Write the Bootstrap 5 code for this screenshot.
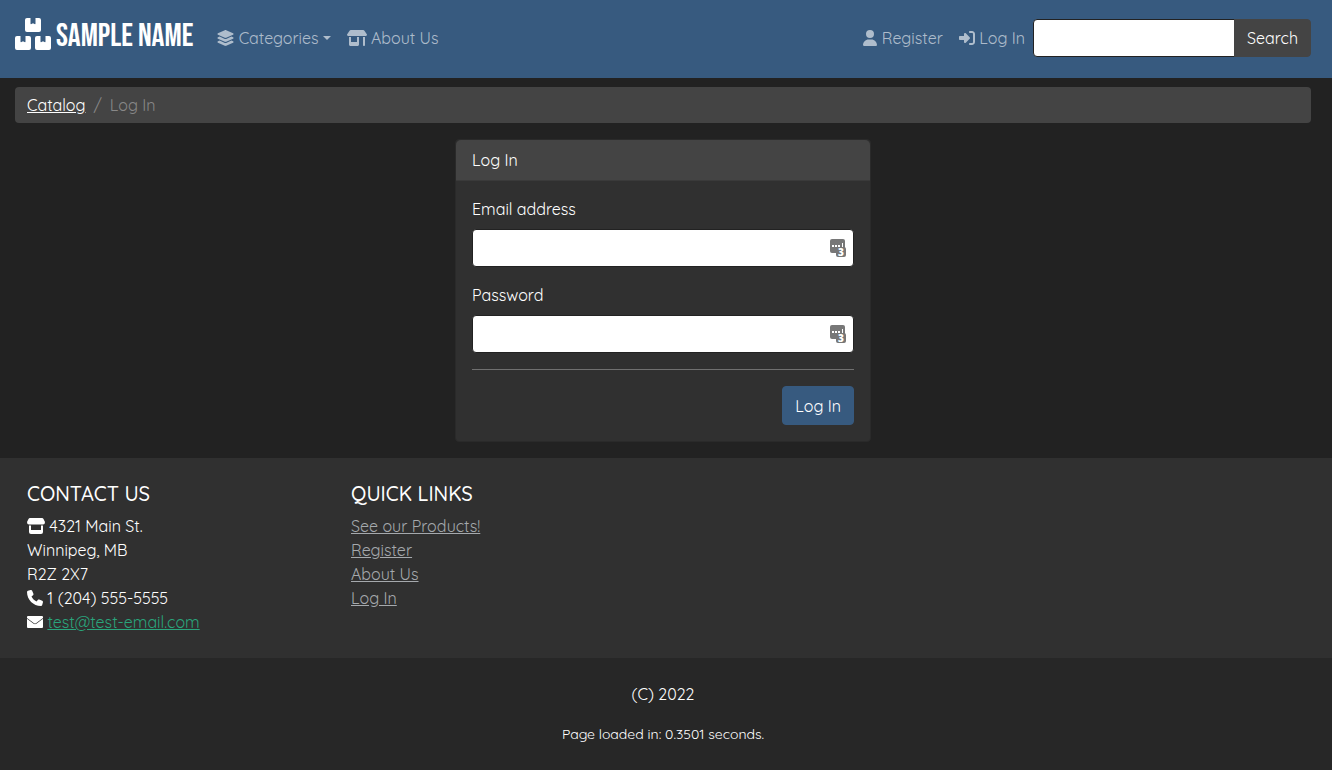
<!DOCTYPE html>
<html lang="en">
<head>
<meta charset="utf-8">
<meta name="viewport" content="width=device-width, initial-scale=1">
<title>Log In</title>
<link href="https://cdn.jsdelivr.net/npm/bootstrap@5.3.0/dist/css/bootstrap.min.css" rel="stylesheet">
<style>
  body { background: #222; color: #fff; font-family: Quicksand, Lato, sans-serif; font-size: 16px; line-height: 24px; }
  .page-gutter { padding-left: 15px; padding-right: 21px; }
  .site-nav { background: #375a7f; padding-top: 16px; padding-bottom: 18px; }
  .site-nav .nav-link, .site-nav .nav-link:hover { color: rgba(255,255,255,.6); padding: 8px; white-space: nowrap; }
  .site-nav .navbar-brand { color: #fff; padding: 0 0 6px; margin-right: 16px; gap: 5px; }
  .brand-name { font: 400 32px/34px "Bebas Neue", "Liberation Sans Narrow", "Liberation Sans", sans-serif; padding-top: 4px; }
  .icon { height: 16px; width: auto; fill: currentColor; vertical-align: -2px; }
  .form-control, .form-control:focus { background: #fff; border-color: #222; border-radius: 4px; height: 38px; color: #222; }
  .search-group { width: 278px; }
  .btn-search, .btn-search:hover { background: #444; border-color: #444; color: #fff; border-radius: 4px; }
  .crumbs { background: #444; border-radius: 4px; padding: 6px 12px; margin: 9px 0 16px; }
  .crumbs a { color: #fff; }
  .crumbs .breadcrumb-item.active, .crumbs .breadcrumb-item::before { color: #888 !important; }
  .login-card { background: #303030; border-color: #2a2a2a; border-radius: 4px; color: #fff; }
  .login-card .card-header { background: #444; border-color: #3a3a3a; }
  .login-card hr { border-color: #707070; opacity: 1; margin: 16px 0; }
  .manager-icon { position: absolute; right: 8px; top: 10px; width: 16px; height: 18px; overflow: visible; }
  .btn-login, .btn-login:hover { background: #375a7f; border-color: #375a7f; color: #fff; border-radius: 4px; height: 39px; }
  .info-band { background: #303030; }
  .info-band h2 { font-size: 20px; line-height: 24px; text-transform: uppercase; }
  .mail-link { color: #2aa57c; }
  .quick-links a { color: #a5a9ad; }
  .legal-band { background: #272727; padding-right: 6px; }
  .load-time { font-size: 14px; }
</style>
</head>
<body class="d-flex flex-column min-vh-100">
<nav class="navbar navbar-expand-lg site-nav">
  <div class="container-fluid page-gutter">
    <a class="navbar-brand d-flex align-items-center" href="#">
      <svg width="36" height="34" viewBox="0 0 36 34" fill="#fff" aria-hidden="true">
        <defs><path id="box" d="M2 0H5.500V5.500Q5.500 6.500 6.500 6L8 5.200L9.500 6Q10.500 6.500 10.500 5.500V0H14Q16 0 16 2V12Q16 14 14 14H2Q0 14 0 12V2Q0 0 2 0Z"/></defs>
        <use href="#box" x="10" y="0"/><use href="#box" x="0" y="18"/><use href="#box" x="20" y="18"/>
      </svg>
      <span class="brand-name">SAMPLE NAME</span>
    </a>
    <button class="navbar-toggler" type="button" data-bs-toggle="collapse" data-bs-target="#menu" aria-controls="menu" aria-label="Toggle navigation"><span class="navbar-toggler-icon"></span></button>
    <div class="collapse navbar-collapse" id="menu">
      <ul class="navbar-nav me-auto">
        <li class="nav-item dropdown"><a class="nav-link dropdown-toggle" href="#" role="button" data-bs-toggle="dropdown"><svg class="icon" viewBox="16 0 544 512" aria-hidden="true"><path d="M264.500 5.200c14.900-6.900 32.100-6.900 47 0l218.600 101c8.500 3.900 13.900 12.400 13.900 21.800s-5.400 17.900-13.900 21.800l-218.600 101c-14.900 6.900-32.100 6.900-47 0L45.900 149.800C37.400 145.800 32 137.300 32 128s5.400-17.900 13.900-21.800L264.500 5.200zM476.900 209.600l53.200 24.600c8.500 3.900 13.900 12.400 13.900 21.800s-5.400 17.900-13.900 21.800l-218.600 101c-14.900 6.900-32.100 6.900-47 0L45.900 277.800C37.400 273.800 32 265.300 32 256s5.400-17.900 13.900-21.800l53.200-24.600 152 70.200c23.400 10.800 50.400 10.800 73.800 0l152-70.200zm-152 198.200l152-70.200 53.200 24.600c8.500 3.900 13.900 12.400 13.900 21.800s-5.400 17.900-13.900 21.800l-218.600 101c-14.900 6.900-32.100 6.900-47 0L45.900 405.800C37.400 401.800 32 393.300 32 384s5.400-17.900 13.900-21.800l53.200-24.600 152 70.200c23.400 10.800 50.400 10.800 73.800 0z"/></svg> Categories</a></li>
        <li class="nav-item"><a class="nav-link" href="#"><svg class="icon" viewBox="0 0 640 512" aria-hidden="true"><path d="M36.800 192H603.200c20.300 0 36.800-16.500 36.800-36.800c0-7.300-2.200-14.400-6.200-20.400L558.200 21.400C549.300 8 534.400 0 518.300 0H121.700c-16 0-31 8-39.900 21.400L6.200 134.700c-4 6.100-6.200 13.200-6.200 20.400C0 175.500 16.500 192 36.800 192zM64 224V464c0 26.600 21.500 48 48 48H336c26.500 0 48-21.500 48-48V224H320V384H128V224H64zm448 0V480c0 17.700 14.300 32 32 32s32-14.300 32-32V224H512z"/></svg> About Us</a></li>
      </ul>
      <ul class="navbar-nav">
        <li class="nav-item"><a class="nav-link" href="#"><svg class="icon" viewBox="0 0 448 512" aria-hidden="true"><path d="M224 256A128 128 0 1 0 224 0a128 128 0 1 0 0 256zm-45.700 48C79.800 304 0 383.800 0 482.300C0 498.700 13.300 512 29.700 512H418.300c16.400 0 29.700-13.300 29.700-29.700C448 383.800 368.200 304 269.700 304H178.300z"/></svg> Register</a></li>
        <li class="nav-item"><a class="nav-link" href="#"><svg class="icon" viewBox="0 0 512 512" aria-hidden="true"><path d="M217.900 105.900L340.700 228.700c7.200 7.200 11.300 17.100 11.300 27.300s-4.100 20.100-11.300 27.300L217.900 406.100c-6.400 6.400-15 9.900-24 9.900c-18.700 0-33.900-15.200-33.900-33.900l0-62.100L32 320c-17.700 0-32-14.300-32-32l0-64c0-17.700 14.300-32 32-32l128 0 0-62.100c0-18.700 15.200-33.900 33.900-33.900c9 0 17.600 3.600 24 9.900zM352 416l64 0c17.700 0 32-14.300 32-32l0-256c0-17.700-14.300-32-32-32l-64 0c-17.700 0-32-14.300-32-32s14.300-32 32-32l64 0c53 0 96 43 96 96l0 256c0 53-43 96-96 96l-64 0c-17.700 0-32-14.300-32-32s14.300-32 32-32z"/></svg> Log In</a></li>
      </ul>
      <form class="input-group search-group flex-nowrap" onsubmit="return false">
        <input class="form-control" type="search" aria-label="Search the catalog">
        <button class="btn btn-search" type="submit">Search</button>
      </form>
    </div>
  </div>
</nav>

<main class="container-fluid page-gutter">
  <nav aria-label="breadcrumb">
    <ol class="breadcrumb crumbs">
      <li class="breadcrumb-item"><a href="#">Catalog</a></li>
      <li class="breadcrumb-item active" aria-current="page">Log In</li>
    </ol>
  </nav>
  <div class="row justify-content-center">
    <div class="col-md-6 col-lg-4">
      <div class="card login-card mb-3">
        <div class="card-header">Log In</div>
        <form class="card-body" onsubmit="return false">
          <label class="form-label" for="email">Email address</label>
          <div class="position-relative mb-3">
            <input class="form-control" id="email" type="email">
            <svg class="manager-icon" viewBox="0 0 16 18" aria-hidden="true"><rect width="15" height="14" rx="2" fill="#777"/><path d="M2 6h2v2H2zM5 6h2v2H5zM8 6h2v2H8zM12 4h1v4h-1z" fill="#fff"/><rect x="6" y="8" width="10" height="10" rx="2" fill="#777"/><text x="8" y="17" font-family="Open Sans" font-size="10" font-weight="800" fill="#fff">3</text></svg>
          </div>
          <label class="form-label" for="password">Password</label>
          <div class="position-relative">
            <input class="form-control" id="password" type="password">
            <svg class="manager-icon" viewBox="0 0 16 18" aria-hidden="true"><rect width="15" height="14" rx="2" fill="#777"/><path d="M2 6h2v2H2zM5 6h2v2H5zM8 6h2v2H8zM12 4h1v4h-1z" fill="#fff"/><rect x="6" y="8" width="10" height="10" rx="2" fill="#777"/><text x="8" y="17" font-family="Open Sans" font-size="10" font-weight="800" fill="#fff">3</text></svg>
          </div>
          <hr>
          <div class="d-flex justify-content-end"><button class="btn btn-login" type="submit">Log In</button></div>
        </form>
      </div>
    </div>
  </div>
</main>

<footer class="flex-grow-1 d-flex flex-column">
  <div class="info-band py-4">
    <div class="page-gutter">
      <div class="row mx-0">
        <section class="col-6 col-md-3">
          <h2>Contact Us</h2>
          <address class="mb-0">
            <svg class="icon" viewBox="0 0 18 16" aria-hidden="true"><path d="M3 0H15Q16 0 16.500 1L18 4Q18 6.500 16 6.500H2Q0 6.500 0 4L1.500 1Q2 0 3 0ZM2 7.500H4V12H14V7.500H16V14Q16 16 14 16H4Q2 16 2 14Z"/></svg> 4321 Main St.<br>
            Winnipeg, MB<br>
            R2Z 2X7<br>
            <svg class="icon" viewBox="0 0 512 512" aria-hidden="true"><path d="M164.900 24.600c-7.700-18.600-28-28.500-47.400-23.200l-88 24C12.100 30.200 0 46 0 64C0 311.400 200.600 512 448 512c18 0 33.800-12.100 38.600-29.500l24-88c5.300-19.400-4.600-39.700-23.200-47.400l-96-40c-16.300-6.800-35.200-2.100-46.300 11.600L304.700 368C234.300 334.700 177.300 277.700 144 207.300L193.300 167c13.700-11.200 18.400-30 11.600-46.300l-40-96z"/></svg> 1 (204) 555-5555<br>
            <svg class="icon" viewBox="0 0 512 512" aria-hidden="true"><path d="M32 64Q0 64 0 96V124L226 294Q256 314 286 294L512 124V96Q512 64 480 64ZM0 150V416Q0 448 32 448H480Q512 448 512 416V150L300 312Q256 340 212 312Z"/></svg> <a class="mail-link" href="mailto:test@test-email.com">test@test-email.com</a>
          </address>
        </section>
        <section class="col-6 col-md-3">
          <h2>Quick Links</h2>
          <ul class="list-unstyled quick-links mb-0">
            <li><a href="#">See our Products!</a></li>
            <li><a href="#">Register</a></li>
            <li><a href="#">About Us</a></li>
            <li><a href="#">Log In</a></li>
          </ul>
        </section>
      </div>
    </div>
  </div>
  <div class="legal-band flex-grow-1 text-center pt-4">
    <p class="mb-3">(C) 2022</p>
    <p class="load-time mb-0">Page loaded in: 0.3501 seconds.</p>
  </div>
</footer>
<script src="https://cdn.jsdelivr.net/npm/bootstrap@5.3.0/dist/js/bootstrap.bundle.min.js"></script>
</body>
</html>
